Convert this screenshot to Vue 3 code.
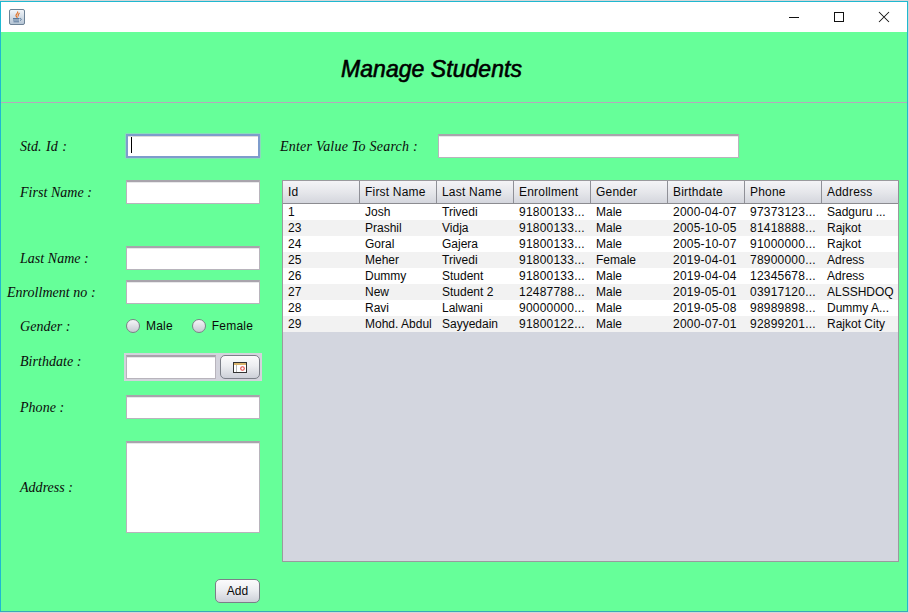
<script setup>
const columns = ['Id', 'First Name', 'Last Name', 'Enrollment', 'Gender', 'Birthdate', 'Phone', 'Address']
const numeric = [3, 5, 6]
const rows = [
  ['1', 'Josh', 'Trivedi', '91800133...', 'Male', '2000-04-07', '97373123...', 'Sadguru ...'],
  ['23', 'Prashil', 'Vidja', '91800133...', 'Male', '2005-10-05', '81418888...', 'Rajkot'],
  ['24', 'Goral', 'Gajera', '91800133...', 'Male', '2005-10-07', '91000000...', 'Rajkot'],
  ['25', 'Meher', 'Trivedi', '91800133...', 'Female', '2019-04-01', '78900000...', 'Adress'],
  ['26', 'Dummy', 'Student', '91800133...', 'Male', '2019-04-04', '12345678...', 'Adress'],
  ['27', 'New', 'Student 2', '12487788...', 'Male', '2019-05-01', '03917120...', 'ALSSHDOQ'],
  ['28', 'Ravi', 'Lalwani', '90000000...', 'Male', '2019-05-08', '98989898...', 'Dummy A...'],
  ['29', 'Mohd. Abdul', 'Sayyedain', '91800122...', 'Male', '2000-07-01', '92899201...', 'Rajkot City'],
]
</script>

<template>
  <div class="window">
    <div class="titlebar">
      <svg class="java" width="16" height="16" viewBox="0 0 16 16">
        <defs>
          <linearGradient id="jv" x1="0" y1="0" x2="0" y2="1">
            <stop offset="0" stop-color="#f4f7fa" />
            <stop offset="1" stop-color="#b4c4d4" />
          </linearGradient>
        </defs>
        <rect x="0.5" y="0.5" width="15" height="15" rx="1.5" fill="url(#jv)" stroke="#6d8296" />
        <path d="M8.5 2.5C10 4 6.5 5 7 6.8 7.3 7.8 8.5 8 8 9M10.5 4C9.5 5 8.5 5.5 9.3 7.5" fill="none" stroke="#e0742a" stroke-width="1.2" />
        <path d="M4 9.5h6M4 11h6M4.5 12.8h5.5" stroke="#5a7a9c" stroke-width="1" />
        <path d="M10.5 9.5c2 -.5 2.5 1.5 .5 2" fill="none" stroke="#5a7a9c" stroke-width="1" />
      </svg>
      <div class="controls">
        <svg width="12" height="12" viewBox="0 0 12 12" class="ctl"><path d="M1 6.5h10" stroke="#111" stroke-width="1" /></svg>
        <svg width="12" height="12" viewBox="0 0 12 12" class="ctl"><rect x="1.5" y="1.5" width="9" height="9" fill="none" stroke="#111" /></svg>
        <svg width="12" height="12" viewBox="0 0 12 12" class="ctl"><path d="M1 1l10 10M11 1L1 11" stroke="#111" stroke-width="1.05" /></svg>
      </div>
    </div>

    <header class="heading"><h1>Manage Students</h1></header>

    <main class="body">
      <section class="form">
        <div class="row r-id"><label>Std. Id :</label><div class="field focused"><i class="caret"></i></div></div>
        <div class="row r-first"><label>First Name :</label><div class="field"></div></div>
        <div class="row r-last"><label>Last Name :</label><div class="field"></div></div>
        <div class="row r-enroll"><label class="wide">Enrollment no :</label><div class="field"></div></div>
        <div class="row r-gender">
          <label>Gender :</label>
          <div class="radios">
            <span class="radio"><i></i>Male</span>
            <span class="radio"><i></i>Female</span>
          </div>
        </div>
        <div class="row r-birth">
          <label class="raised">Birthdate :</label>
          <div class="datepicker">
            <div class="field date"></div>
            <button class="btn cal" type="button">
              <svg width="14" height="11" viewBox="0 0 14 11">
                <rect x="0.5" y="0.5" width="13" height="10" fill="#fff" stroke="#333" />
                <rect x="1" y="1" width="12" height="2" fill="#d9b46c" />
                <rect x="3" y="3" width="1" height="7" fill="#b9b9b9" />
                <circle cx="9.5" cy="6.5" r="1.8" fill="none" stroke="#e2453c" stroke-width="1.1" />
              </svg>
            </button>
          </div>
        </div>
        <div class="row r-phone"><label>Phone :</label><div class="field"></div></div>
        <div class="row r-address"><label>Address :</label><div class="field area"></div></div>
        <div class="actions"><button class="btn add" type="button">Add</button></div>
      </section>

      <section class="results">
        <div class="search">
          <label>Enter Value To Search :</label>
          <div class="field searchbox"></div>
        </div>
        <div class="table">
          <div class="thead">
            <div v-for="c in columns" :key="c" class="th">{{ c }}</div>
          </div>
          <div v-for="(r, i) in rows" :key="i" class="tr">
            <div v-for="(v, j) in r" :key="j" class="td" :class="{ num: numeric.includes(j) }">{{ v }}</div>
          </div>
        </div>
      </section>
    </main>
  </div>
</template>

<style>
html, body { margin: 0; background: #d4d6d8; overflow: hidden; }
</style>

<style scoped>
.window {
  width: 908px;
  height: 611px;
  margin-top: 1px;
  box-sizing: border-box;
  border: 1px solid #1fb8d0;
  border-bottom-color: #3aa8b8;
  background: #66ff99;
  display: flex;
  flex-direction: column;
  font-family: "Liberation Sans", Arial, sans-serif;
  font-size: 12px;
  color: #0a0a0a;
  overflow: hidden;
}
.titlebar {
  height: 30px;
  flex: none;
  background: #fff;
  display: flex;
  align-items: center;
  justify-content: space-between;
  padding-left: 8px;
}
.java { margin-top: -1px; }
.controls { display: flex; gap: 33px; margin-right: 17px; margin-top: -1px; }
.ctl { display: block; }
.heading {
  height: 71px;
  flex: none;
  box-sizing: border-box;
  border-bottom: 1px solid #b5a9bd;
  display: flex;
  align-items: center;
  padding: 4px 0 0 340px;
}
h1 {
  margin: 0;
  font-size: 23px;
  font-style: italic;
  font-weight: normal;
  -webkit-text-stroke: 0.6px #000;
  letter-spacing: 0.05px;
  color: #000;
}
.body { flex: 1; display: flex; min-height: 0; }
.form { width: 281px; flex: none; padding-top: 31px; box-sizing: border-box; }
.row { display: flex; align-items: center; padding-left: 19px; }
label {
  font-family: "Liberation Serif", "Times New Roman", serif;
  font-style: italic;
  font-size: 14px;
  letter-spacing: 0.03px;
  padding-top: 2px;
  color: #0a0a0a;
}
.row > label { width: 106px; flex: none; white-space: nowrap; }
.row > label.wide { margin-left: -13px; width: 119px; }
.row > label.raised { padding-bottom: 12px; }
.r-id label { word-spacing: 1px; }
.field {
  width: 134px;
  height: 24px;
  box-sizing: border-box;
  background: #fff;
  border: 1px solid #b8b4bc;
  border-top: 2px solid #a8a4ac;
  box-shadow: inset 0 1px 0 #e8e8ea;
  position: relative;
}
.focused {
  border: 2px solid #7e9ccc;
  box-shadow: inset 0 1px 0 #dcdcdc, 0 0 0 0.5px #a9bcdc;
}
.caret {
  display: block;
  position: absolute;
  left: 3px;
  top: 1px;
  width: 1px;
  height: 16px;
  background: #000;
}
.r-first { margin-top: 22px; }
.r-last { margin-top: 42px; }
.r-enroll { margin-top: 10px; }
.r-gender { margin-top: 10px; height: 24px; }
.r-birth { margin-top: 15px; height: 28px; }
.r-phone { margin-top: 14px; }
.r-address { margin-top: 22px; }
.radios { display: flex; gap: 19px; }
.radio { display: flex; align-items: center; gap: 6px; font-size: 12px; letter-spacing: 0.2px; color: #0a0a0a; }
.radio i {
  display: block;
  width: 14px;
  height: 14px;
  box-sizing: border-box;
  border-radius: 50%;
  border: 1px solid #7d8088;
  background: linear-gradient(#f6f6f8, #c6c9d2);
}
.datepicker {
  margin-left: -2px;
  width: 138px;
  height: 28px;
  box-sizing: border-box;
  padding: 2px;
  background: #d3d3dc;
  display: flex;
  justify-content: space-between;
}
.date { width: 90px; }
.btn {
  box-sizing: border-box;
  border: 1px solid #7b7f88;
  border-radius: 5px;
  background: linear-gradient(#fbfbfc 0%, #eceef1 45%, #cdd0d8 100%);
  font-family: inherit;
  font-size: 12px;
  color: #0a0a0a;
  padding: 0;
  display: flex;
  align-items: center;
  justify-content: center;
}
.cal { width: 40px; height: 24px; }
.area { height: 92px; }
.actions { margin-top: 46px; padding-left: 214px; }
.add { width: 45px; height: 24px; }
.results { flex: 1; min-width: 0; padding-top: 31px; }
.search { display: flex; align-items: center; height: 24px; margin-left: -2px; }
.search label { width: 158px; flex: none; white-space: nowrap; letter-spacing: 0.22px; }
.searchbox { width: 301px; }
.table {
  margin-top: 22px;
  width: 617px;
  height: 382px;
  box-sizing: border-box;
  border: 1px solid #9a9a9e;
  background: #d3d6df;
}
.thead {
  display: grid;
  grid-template-columns: repeat(8, 77px);
  height: 22px;
  background: linear-gradient(#f4f4f7 0%, #e6e7eb 50%, #d4d6dd 100%);
  border-bottom: 1px solid #8b8b90;
}
.th {
  box-sizing: border-box;
  padding-left: 5px;
  line-height: 22px;
  border-right: 1px solid #8f9097;
  white-space: nowrap;
  letter-spacing: 0.2px;
  color: #0a0a0a;
}
.tr {
  display: grid;
  grid-template-columns: repeat(8, 77px);
  height: 16px;
  background: #fff;
}
.tr:nth-child(odd) { background: #f2f2f2; }
.td {
  padding-left: 5px;
  line-height: 16px;
  white-space: nowrap;
  overflow: hidden;
  color: #0a0a0a;
}
.td.num { letter-spacing: 0.22px; }
</style>
